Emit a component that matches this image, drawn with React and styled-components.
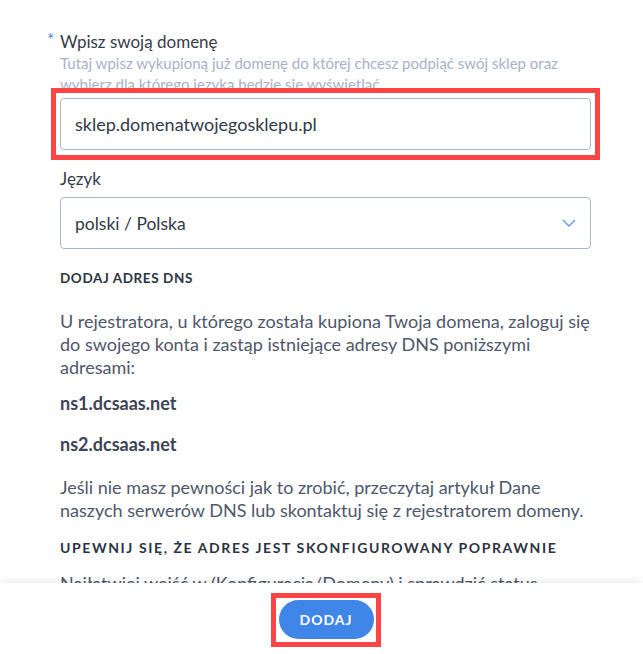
import React from 'react'
import styled, { createGlobalStyle } from 'styled-components'

const GlobalStyle = createGlobalStyle`
  html, body {
    margin: 0;
    padding: 0;
    background: #fff;
  }
  body {
    font-family: Lato, "Liberation Sans", sans-serif;
  }
`

const Page = styled.div`
  width: 643px;
  height: 654px;
  display: flex;
  flex-direction: column;
  overflow: hidden;
  background: #fff;
`

const Scroll = styled.div`
  flex: 1;
  overflow: hidden;
  padding: 31px 52px 0 60px;
`

const Label = styled.div`
  position: relative;
  font-size: 17px;
  line-height: 22px;
  color: #353c4a;
  margin-bottom: ${p => p.gap || 0}px;
`

const Star = styled.span`
  position: absolute;
  left: -13px;
  top: -2px;
  color: #3f86e8;
  font-size: 17px;
`

const Hint = styled.div`
  font-size: 15px;
  line-height: 21px;
  color: #a9b1c6;
`

const Highlight = styled.div`
  position: relative;
  margin: -7px -9px 0;
  padding: 5px 4px;
  border: 5px solid #fd4444;
  background: #fff;
`

const Field = styled.div`
  height: 50px;
  border: 1px solid #aeb6cd;
  border-radius: 4px;
  display: flex;
  align-items: center;
  justify-content: space-between;
  padding: 0 14px 0 14px;
  font-size: ${p => p.size || 17.5}px;
  color: #323a48;
  background: #fff;
`

const Chevron = styled.svg`
  width: 14px;
  height: 8px;
`

const Group = styled.div`
  margin-top: ${p => p.top || 0}px;
`

const Heading = styled.div`
  margin-top: ${p => p.top || 0}px;
  font-size: ${p => p.size || 14}px;
  line-height: 20px;
  font-weight: 700;
  letter-spacing: ${p => p.spacing || 1.6}px;
  color: #2c3342;
`

const Text = styled.p`
  margin: ${p => p.top || 0}px 0 0;
  font-size: 18px;
  line-height: 23px;
  color: #4f576a;
`

const Server = styled.div`
  margin-top: ${p => p.top || 0}px;
  font-size: 18px;
  line-height: 22px;
  font-weight: 700;
  color: #3c4456;
`

const Footer = styled.div`
  height: 71px;
  flex: none;
  display: flex;
  align-items: center;
  justify-content: center;
  padding-left: 8px;
  padding-top: 2px;
  box-sizing: border-box;
  background: #fff;
  box-shadow: 0 -3px 8px rgba(0, 0, 0, 0.07);
  position: relative;
`

const ButtonMark = styled.div`
  border: 5px solid #fd4444;
  padding: 2px 2px 3px 3px;
`

const Button = styled.button`
  width: 95px;
  height: 39px;
  border: none;
  border-radius: 20px;
  background: #3f86e8;
  color: #fff;
  font-family: Lato, "Liberation Sans", sans-serif;
  font-size: 14px;
  font-weight: 700;
  letter-spacing: 1px;
  cursor: pointer;
`

export default function App() {
  return (
    <Page>
      <GlobalStyle />
      <Scroll>
        <Label>
          <Star>*</Star>Wpisz swoją domenę
        </Label>
        <Hint>
          Tutaj wpisz wykupioną już domenę do której chcesz podpiąć swój sklep oraz
          wybierz dla którego języka będzie się wyświetlać
        </Hint>
        <Highlight>
          <Field size={18}>sklep.domenatwojegosklepu.pl</Field>
        </Highlight>

        <Group top={8}>
          <Label gap={7}>Język</Label>
          <Field>
            polski / Polska
            <Chevron viewBox="0 0 14 8">
              <path d="M1 1l6 6 6-6" fill="none" stroke="#5b9be8" strokeWidth="1.4" />
            </Chevron>
          </Field>
        </Group>

        <Heading top={19} size={13.5} spacing={0.6}>DODAJ ADRES DNS</Heading>
        <Text top={22}>
          U rejestratora, u którego została kupiona Twoja domena, zaloguj się do swojego
          konta i zastąp istniejące adresy DNS poniższymi adresami:
        </Text>
        <Server top={13}>ns1.dcsaas.net</Server>
        <Server top={19}>ns2.dcsaas.net</Server>
        <Text top={21}>
          Jeśli nie masz pewności jak to zrobić, przeczytaj artykuł Dane naszych serwerów
          DNS lub skontaktuj się z rejestratorem domeny.
        </Text>
        <Heading top={16}>UPEWNIJ SIĘ, ŻE ADRES JEST SKONFIGUROWANY POPRAWNIE</Heading>
        <Text top={14}>
          Najłatwiej wejść w (Konfiguracja/Domeny) i sprawdzić status podpiętej domeny.
        </Text>
      </Scroll>
      <Footer>
        <ButtonMark>
          <Button>DODAJ</Button>
        </ButtonMark>
      </Footer>
    </Page>
  )
}
